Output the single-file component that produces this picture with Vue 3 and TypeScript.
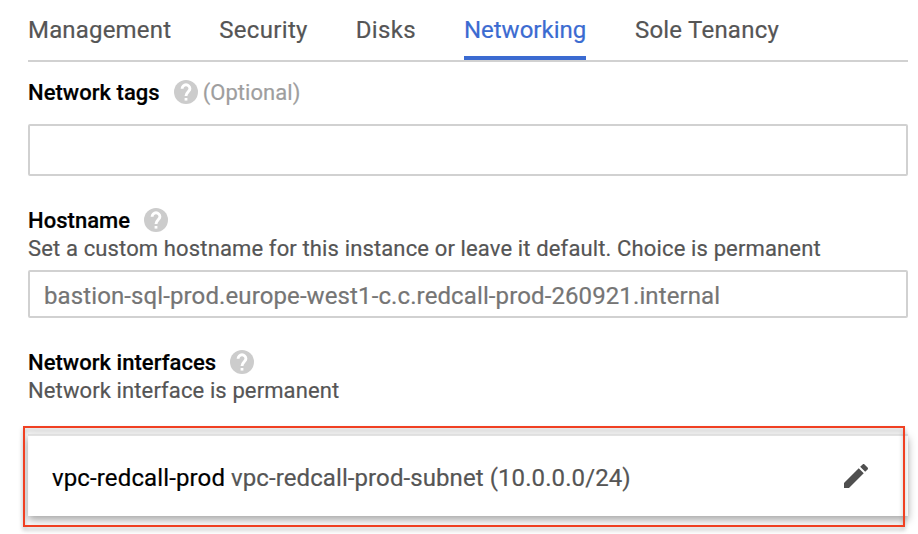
<script setup lang="ts">
interface Tab {
  id: string
  label: string
}

const tabs: Tab[] = [
  { id: 'management', label: 'Management' },
  { id: 'security', label: 'Security' },
  { id: 'disks', label: 'Disks' },
  { id: 'networking', label: 'Networking' },
  { id: 'tenancy', label: 'Sole Tenancy' },
]
const activeTab = 'networking'

const hookPath = 'M8.100 8.700a3.900 3.900 0 1 1 7.800 0c0 2.900-3.900 3.300-3.900 7.300'
const dotPath = 'M10.600 18h2.800v2.600h-2.800z'
</script>

<template>
  <main class="page">
    <nav class="tabs">
      <a v-for="tab in tabs" :key="tab.id" class="tab" :class="[tab.id, { active: tab.id === activeTab }]">{{ tab.label }}</a>
    </nav>

    <section class="tags">
      <div class="heading">
        <h2 class="title">Network tags</h2>
        <svg class="help" viewBox="0 0 24 24"><circle cx="12" cy="12" r="12" /><path class="hook" :d="hookPath" /><path class="dot" :d="dotPath" /></svg>
        <span class="optional">(Optional)</span>
      </div>
      <div class="field tall"></div>
    </section>

    <section class="hostname">
      <div class="heading">
        <h2 class="title">Hostname</h2>
        <svg class="help" viewBox="0 0 24 24"><circle cx="12" cy="12" r="12" /><path class="hook" :d="hookPath" /><path class="dot" :d="dotPath" /></svg>
      </div>
      <p class="hint">Set a custom hostname for this instance or leave it default. Choice is permanent</p>
      <div class="field"><span class="placeholder">bastion-sql-prod.europe-west1-c.c.redcall-prod-260921.internal</span></div>
    </section>

    <section class="interfaces">
      <div class="heading">
        <h2 class="title">Network interfaces</h2>
        <svg class="help" viewBox="0 0 24 24"><circle cx="12" cy="12" r="12" /><path class="hook" :d="hookPath" /><path class="dot" :d="dotPath" /></svg>
      </div>
      <p class="hint short">Network interface is permanent</p>
      <div class="card">
        <span class="network">vpc-redcall-prod</span>
        <span class="subnet">vpc-redcall-prod-subnet (10.0.0.0/24)</span>
        <svg class="edit" viewBox="3 3 18 18"><path d="M3 17.250V21h3.750L17.810 9.940l-3.750-3.750L3 17.250zM20.710 7.040c.39-.39.39-1.020 0-1.410l-2.340-2.340c-.39-.39-1.020-.39-1.410 0l-1.830 1.830 3.750 3.750 1.830-1.830z" /></svg>
        <div class="highlight"></div>
      </div>
    </section>
  </main>
</template>

<style>
body {
  background: #fff;
}
</style>

<style scoped>
.page {
  box-sizing: border-box;
  height: 534px;
  padding: 0 10px 0 28px;
  overflow: hidden;
  font-family: Roboto, 'Liberation Sans', sans-serif;
  color: #555;
  -webkit-text-stroke: 0.2px currentColor;
}
.tabs {
  display: flex;
  gap: 48px;
  height: 60px;
  border-bottom: 2px solid #d1d1d1;
}
.tab {
  box-sizing: border-box;
  height: 60px;
  padding-top: 14px;
  font-size: 24px;
  line-height: 32px;
  white-space: nowrap;
}
.tab.active {
  color: #3b6bd1;
  border-bottom: 4px solid #3b6bd1;
}
.tab.management {
  letter-spacing: 0.18px;
}
.tab.security {
  letter-spacing: 0.33px;
}
.tab.disks {
  letter-spacing: 0.32px;
}
.tab.tenancy {
  margin-left: 0.7px;
  letter-spacing: 0.23px;
}
.heading {
  display: flex;
  align-items: center;
  height: 28px;
}
.tags .heading {
  margin-top: 16px;
}
.hostname .heading {
  margin-top: 30px;
}
.interfaces .heading {
  margin-top: 30px;
}
.title {
  margin: 0;
  padding-top: 2px;
  font-size: 22px;
  line-height: 28px;
  font-weight: 500;
  letter-spacing: 0.04px;
  color: #000;
  white-space: nowrap;
}
.help {
  width: 24px;
  height: 24px;
  margin-left: 14px;
  fill: #ccc;
}
.hook {
  fill: none;
  stroke: #fff;
  stroke-width: 2.9;
}
.dot {
  fill: #fff;
}
.optional {
  margin-left: 5px;
  padding-top: 2px;
  font-size: 22px;
  line-height: 28px;
  letter-spacing: 0.04px;
  color: #9e9e9e;
}
.hint {
  margin: 0;
  padding-top: 1px;
  font-size: 22px;
  line-height: 28px;
  letter-spacing: 0.137px;
  white-space: nowrap;
}
.hint.short {
  letter-spacing: 0.11px;
}
.field {
  box-sizing: border-box;
  display: flex;
  align-items: center;
  height: 48px;
  margin-top: 7px;
  padding: 4px 14px 0;
  border: 2px solid #d1d1d1;
  border-radius: 2px;
}
.field.tall {
  height: 52px;
  margin-top: 18px;
}
.placeholder {
  font-size: 24px;
  line-height: 32px;
  letter-spacing: 0.11px;
  color: #757575;
  white-space: nowrap;
}
.card {
  position: relative;
  box-sizing: border-box;
  display: flex;
  align-items: center;
  height: 82px;
  margin-top: 29px;
  padding: 4px 40px 0 24px;
  border-top: 2px solid #e3e3e3;
  background: #fff;
  box-shadow: 0 4px 8px rgba(0, 0, 0, 0.35);
  font-size: 24px;
  line-height: 32px;
  white-space: nowrap;
}
.network {
  letter-spacing: 0.13px;
  color: #000;
}
.subnet {
  margin-left: 6px;
  letter-spacing: 0.09px;
}
.edit {
  width: 24px;
  height: 24px;
  margin: 0 0 4px auto;
  fill: #4f4f4f;
}
.highlight {
  position: absolute;
  box-sizing: border-box;
  top: -10px;
  left: -5px;
  width: 882px;
  height: 101px;
  border: 2px solid #f04022;
  filter: drop-shadow(0 3px 2px rgba(0, 0, 0, 0.3));
}
</style>
